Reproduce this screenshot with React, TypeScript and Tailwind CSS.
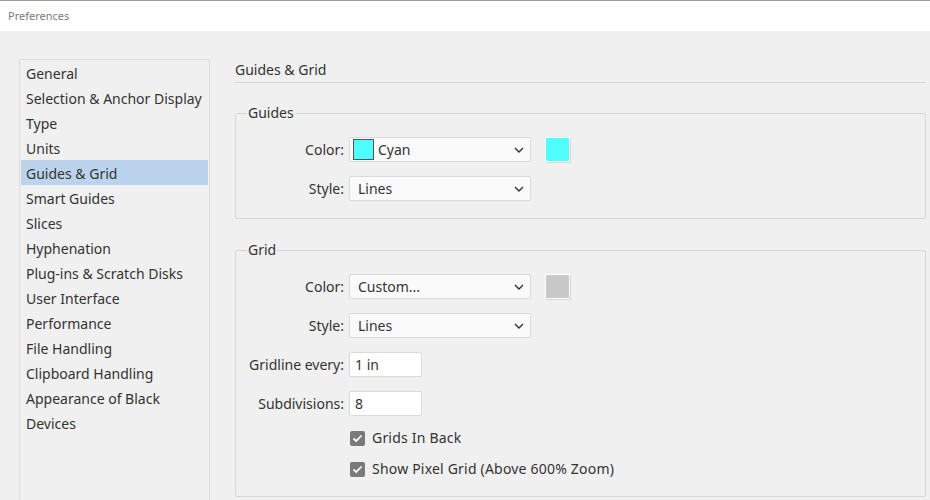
import React from "react";

const NAV = [
  "General",
  "Selection & Anchor Display",
  "Type",
  "Units",
  "Guides & Grid",
  "Smart Guides",
  "Slices",
  "Hyphenation",
  "Plug-ins & Scratch Disks",
  "User Interface",
  "Performance",
  "File Handling",
  "Clipboard Handling",
  "Appearance of Black",
  "Devices",
];

function Chevron() {
  return (
    <svg width="10" height="6" viewBox="0 0 10 6" className="shrink-0">
      <polyline points="1,1 5,5 9,1" fill="none" stroke="#333" strokeWidth="1.4" />
    </svg>
  );
}

function Select({ value, swatch }: { value: string; swatch?: string }) {
  return (
    <div className="flex items-center w-[182px] h-[25px] bg-[#fafafa] border border-[#dadada] rounded-[2px] pl-[3px] pr-[6px]">
      {swatch ? (
        <span
          className="w-[21px] h-[21px] border border-[#555] mr-[4px] shrink-0"
          style={{ background: swatch }}
        />
      ) : (
        <span className="w-[5px]" />
      )}
      <span className="flex-1 text-[#333]">{value}</span>
      <Chevron />
    </div>
  );
}

function Swatch({ color }: { color: string }) {
  return (
    <span
      className="ml-[14px] w-[25px] h-[25px] border border-white shadow-[1px_1px_0_#d6d6d6]"
      style={{ background: color }}
    />
  );
}

function Row({ label, children }: { label: string; children: React.ReactNode }) {
  return (
    <div className="flex items-center">
      <span className="w-[96px] text-right mr-[5px] text-[#333]">{label}</span>
      {children}
    </div>
  );
}

function TextInput({ value }: { value: string }) {
  return (
    <div className="w-[73px] h-[25px] bg-white border border-[#dadada] rounded-[2px] px-[5px] flex items-center text-[#333]">
      {value}
    </div>
  );
}

function Check({ label }: { label: string }) {
  return (
    <div className="flex items-center h-[20px] pl-[102px]">
      <span className="w-[15px] h-[15px] rounded-[2px] bg-[#7a7a7a] flex items-center justify-center">
        <svg width="11" height="9" viewBox="0 0 11 9">
          <polyline points="1.5,4.5 4.2,7 9.5,1.5" fill="none" stroke="white" strokeWidth="1.8" />
        </svg>
      </span>
      <span className="ml-[7px] text-[#333] tracking-[0.2px]">{label}</span>
    </div>
  );
}

export default function App() {
  return (
    <div className="w-[930px] h-[500px] overflow-hidden bg-[#f0f0f0] text-[14px] leading-[20px] font-['Segoe_UI','Noto_Sans',sans-serif]">
      <div className="h-[31px] bg-white border-t border-[#9a9a9a] flex items-center pl-[8px] text-[11px] text-[#7a7a7a]">
        Preferences
      </div>
      <div className="flex pt-[28px] pl-[19px]">
        <div className="w-[191px] h-[460px] border border-[#dcdcdc] rounded-[2px] px-[1px] shrink-0">
          {NAV.map((n) => (
            <div
              key={n}
              className={`h-[25px] flex items-center pl-[5px] pt-[2px] text-[#333] ${
                n === "Guides & Grid" ? "bg-[#bcd3ee]" : ""
              }`}
            >
              {n}
            </div>
          ))}
        </div>
        <div className="ml-[25px] w-[691px]">
          <div className="h-[24px] border-b border-[#d8d8d8] text-[#333] leading-[22px]">Guides &amp; Grid</div>
          <fieldset className="mt-[20px] border border-[#d6d6d6] rounded-[2px] pl-[12px] pt-[14px] pb-[17px]">
            <legend className="ml-[-1px] px-[1px] text-[#333] leading-[20px]">Guides</legend>
            <div className="flex flex-col gap-[14px]">
              <Row label="Color:">
                <Select value="Cyan" swatch="#4fffff" />
                <Swatch color="#4fffff" />
              </Row>
              <Row label="Style:">
                <Select value="Lines" />
              </Row>
            </div>
          </fieldset>
          <fieldset className="mt-[21px] border border-[#d6d6d6] rounded-[2px] pl-[12px] pt-[14px] pb-[17px]">
            <legend className="ml-[-1px] px-[1px] text-[#333] leading-[20px]">Grid</legend>
            <div className="flex flex-col gap-[14px]">
              <Row label="Color:">
                <Select value="Custom..." />
                <Swatch color="#c8c8c8" />
              </Row>
              <Row label="Style:">
                <Select value="Lines" />
              </Row>
              <Row label="Gridline every:">
                <TextInput value="1 in" />
              </Row>
              <Row label="Subdivisions:">
                <TextInput value="8" />
              </Row>
            </div>
            <div className="flex flex-col gap-[11px] mt-[12px]">
              <Check label="Grids In Back" />
              <Check label="Show Pixel Grid (Above 600% Zoom)" />
            </div>
          </fieldset>
        </div>
      </div>
    </div>
  );
}
